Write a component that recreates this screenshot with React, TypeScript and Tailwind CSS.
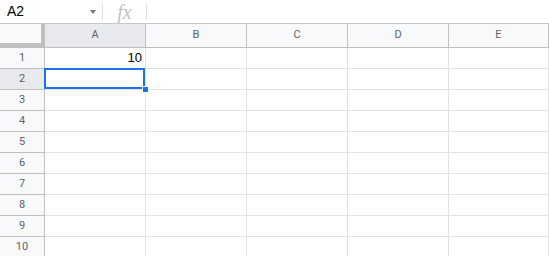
import React from "react"

const cols = ["A", "B", "C", "D", "E"]
const rows = [1, 2, 3, 4, 5, 6, 7, 8, 9, 10]

const colWidth = ["w-[101px]", "w-[101px]", "w-[101px]", "w-[101px]", "flex-1"]

export default function App() {
  return (
    <div className="w-[549px] h-[256px] overflow-hidden bg-white font-['Roboto','Liberation_Sans',sans-serif]">
      {/* formula bar */}
      <div className="flex h-[24px] items-center border-b border-[#c7c7c7]">
        <div className="flex w-[102px] items-center pl-[7px] pr-[6px]">
          <span className="flex-1 font-['Liberation_Sans',sans-serif] text-[14px] text-black">A2</span>
          <span className="mt-[1px] h-0 w-0 border-x-[3.5px] border-t-[4px] border-x-transparent border-t-[#757575]" />
        </div>
        <div className="h-[17px] w-px bg-[#e0e0e0]" />
        <span className="w-[43px] text-center font-['Liberation_Serif',serif] text-[20px] italic leading-none text-[#c2c2c2]">
          fx
        </span>
        <div className="h-[17px] w-px bg-[#e0e0e0]" />
      </div>

      {/* column headers */}
      <div className="flex h-[24px]">
        <div className="w-[45px] shrink-0 border-b-[5px] border-r-[4px] border-[#c0c0c0] bg-[#f8f9fa]" />
        {cols.map((c, i) => (
          <div
            key={c}
            className={`${colWidth[i]} flex shrink-0 items-center justify-center border-b border-r border-[#c0c0c0] text-[11px] text-[#5f6368] ${
              i === 0 ? "bg-[#e8eaed]" : "bg-[#f8f9fa]"
            }`}
          >
            {c}
          </div>
        ))}
      </div>

      {/* rows */}
      {rows.map((r) => (
        <div key={r} className="flex h-[21px]">
          <div
            className={`flex w-[45px] shrink-0 items-center justify-center border-b border-r border-[#c0c0c0] text-[11px] text-[#5f6368] ${
              r === 2 ? "bg-[#e8eaed]" : "bg-[#f8f9fa]"
            }`}
          >
            {r}
          </div>
          {cols.map((c, i) => (
            <div
              key={c}
              className={`${colWidth[i]} relative flex shrink-0 items-center justify-end border-b border-r border-[#e2e2e3] pr-[3px] font-['Liberation_Sans',sans-serif] text-[13px] text-black`}
            >
              {r === 1 && i === 0 ? "10" : null}
              {r === 2 && i === 0 ? (
                <>
                  <div className="absolute -left-px -top-px z-10 h-[21px] w-[101px] border-2 border-[#1a73e8]" />
                  <div className="absolute right-[-4px] bottom-[-4px] z-20 h-[7px] w-[7px] border border-white bg-[#1a73e8]" />
                </>
              ) : null}
            </div>
          ))}
        </div>
      ))}
    </div>
  )
}
